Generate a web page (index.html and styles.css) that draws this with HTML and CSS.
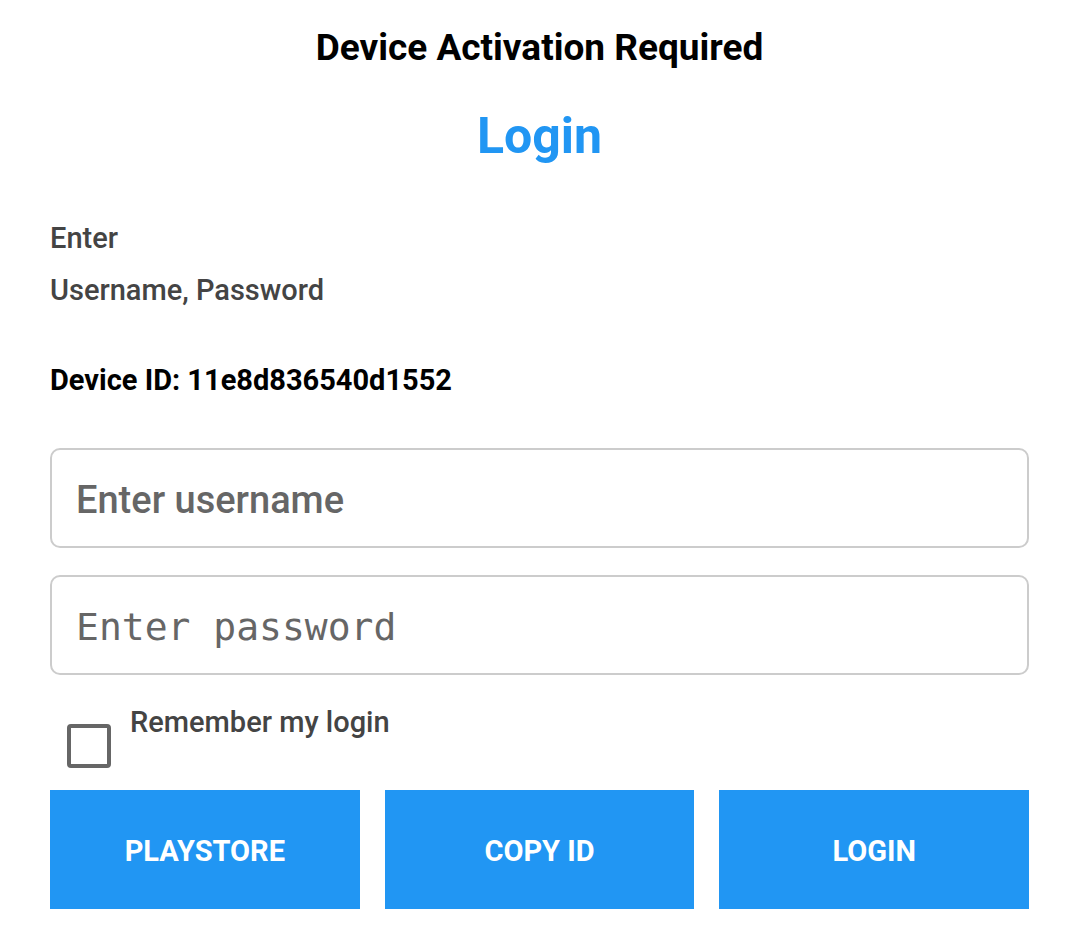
FILE: index.html
```html
<!DOCTYPE html>
<html>
<head>
<meta charset="utf-8">
<link rel="stylesheet" href="styles.css">
</head>
<body>
<div class="page">
  <h1 class="title">Device Activation Required</h1>
  <h2 class="login-title">Login</h2>
  <p class="hint">Enter</p>
  <p class="hint hint-2">Username, Password</p>
  <p class="device-id">Device ID: 11e8d836540d1552</p>
  <div class="field"><span class="ph ph-user">Enter username</span></div>
  <div class="field field-2"><span class="ph ph-pass">Enter password</span></div>
  <div class="remember">
    <span class="box"></span>
    <span class="remember-label">Remember my login</span>
  </div>
  <div class="buttons">
    <div class="btn">PLAYSTORE</div>
    <div class="btn">COPY ID</div>
    <div class="btn">LOGIN</div>
  </div>
</div>
</body>
</html>
```
FILE: styles.css
```css
html, body {
  margin: 0;
  padding: 0;
  background: #fff;
}
body {
  font-family: Roboto, "Noto Sans", sans-serif;
}
.page {
  padding: 0 47px 0 50px;
  display: flex;
  flex-direction: column;
}
.title {
  margin: 26px 0 0;
  text-align: center;
  font-size: 37px;
  font-weight: 700;
  color: #000;
  line-height: 43px;
}
.login-title {
  margin: 38px 0 0;
  text-align: center;
  font-size: 50px;
  font-weight: 700;
  color: #2196f3;
  line-height: 58px;
}
.hint {
  margin: 56px 0 0;
  font-size: 29px;
  font-weight: 500;
  color: #444;
  line-height: 34px;
}
.hint-2 {
  margin-top: 18px;
}
.device-id {
  margin: 56px 0 0;
  font-size: 29px;
  font-weight: 700;
  color: #000;
  line-height: 34px;
}
.field {
  margin-top: 51px;
  height: 96px;
  border: 2px solid #ccc;
  border-radius: 10px;
  display: flex;
  align-items: center;
  padding-left: 24px;
}
.field-2 {
  margin-top: 27px;
}
.ph {
  color: #666;
  font-size: 38px;
}
.ph-user {
  font-weight: 500;
  padding-top: 3px;
}
.ph-pass {
  font-family: "DejaVu Sans Mono", "Liberation Mono", monospace;
  font-size: 38px;
  padding-top: 3px;
}
.remember {
  display: flex;
  align-items: flex-start;
  margin-top: 30px;
  margin-left: 17px;
  height: 85px;
}
.box {
  margin-top: 19px;
  width: 36px;
  height: 36px;
  border: 4px solid #666;
  border-radius: 4px;
}
.remember-label {
  margin-left: 19px;
  font-size: 29px;
  font-weight: 500;
  color: #444;
  line-height: 34px;
}
.buttons {
  display: grid;
  grid-template-columns: 1fr 1fr 1fr;
  gap: 25px;
}
.btn {
  height: 119px;
  box-sizing: border-box;
  padding-top: 3px;
  background: #2196f3;
  color: #fff;
  font-size: 29px;
  font-weight: 700;
  display: flex;
  align-items: center;
  justify-content: center;
}
```
